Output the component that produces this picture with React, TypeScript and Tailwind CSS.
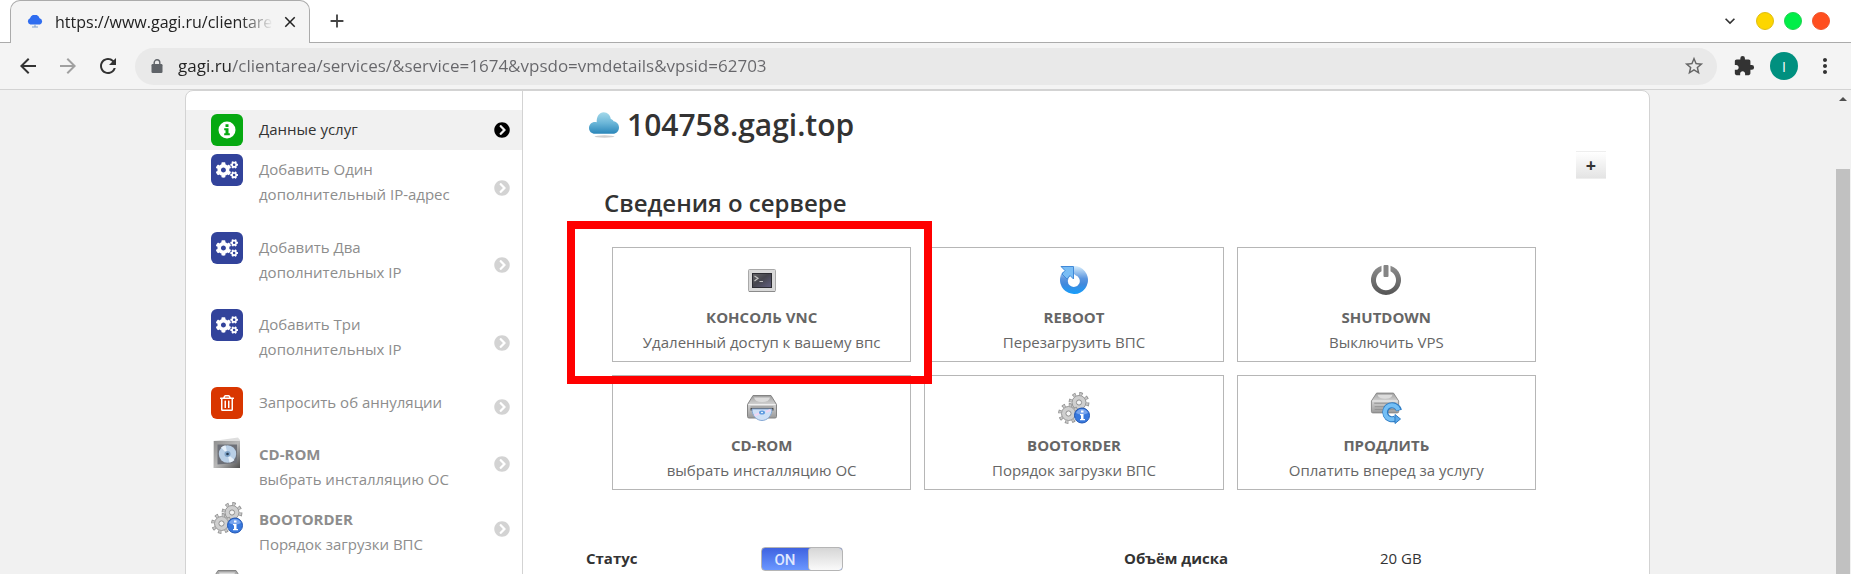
import type { ReactNode } from 'react'
import { FaChevronCircleRight, FaCogs, FaRegTrashAlt } from 'react-icons/fa'
import {
  MdAdd,
  MdArrowBack,
  MdArrowForward,
  MdClose,
  MdExtension,
  MdKeyboardArrowDown,
  MdMoreVert,
  MdRefresh,
  MdStarBorder,
} from 'react-icons/md'

/* ---------- Icons ---------- */

function FaviconCloud() {
  return (
    <svg viewBox="0 0 16 14" className="h-[14px] w-4 shrink-0" aria-hidden="true">
      <path
        d="M3.4 9.600A3.300 3.300 0 0 1 3 3.300 5 5 0 0 1 12.600 3.300 3.300 3.300 0 0 1 13 9.600Z"
        fill="#2f6df0"
      />
      <path d="M7.500 9.600h1v2h-1zM5 11.400h6v1H5z" fill="#7f9fce" />
    </svg>
  )
}

function LockIcon() {
  return (
    <svg viewBox="0 0 12 14" className="h-[14px] w-3 shrink-0" aria-hidden="true">
      <path d="M3.200 6V3.600a2.800 2.800 0 0 1 5.600 0V6" fill="none" stroke="#5f6368" strokeWidth="1.400" />
      <rect x="0.500" y="5" width="11" height="9" rx="1.200" fill="#5f6368" />
    </svg>
  )
}

function InfoIcon() {
  return (
    <svg viewBox="0 0 18 18" className="size-[18px]" aria-hidden="true">
      <circle cx="9" cy="9" r="8.500" fill="#fff" />
      <path d="M7.500 3.300h3v2.600h-3zM6.200 7.200h4.300v5h1.300v2H6.200v-2h1.300v-3H6.200z" fill="#06a911" />
    </svg>
  )
}

function CloudIcon() {
  return (
    <svg viewBox="0 0 30 26" className="h-[26px] w-[30px] shrink-0" aria-hidden="true">
      <defs>
        <linearGradient id="cloud" x1="0" y1="0" x2="0" y2="1">
          <stop offset="0" stopColor="#a4d9ea" />
          <stop offset="0.5" stopColor="#6bb6d8" />
          <stop offset="1" stopColor="#2a86b9" />
        </linearGradient>
      </defs>
      <ellipse cx="15.500" cy="24.500" rx="10" ry="1.200" fill="#cfcfcf" />
      <path
        d="M6 21.800C2.500 21.800 0 19.400 0 16c0-3.300 2.400-6 6-6 .6 0 1.200 0 1.700.2C7.400 4.500 10.400.2 14.600.2c4 0 6.800 3 7.200 6.800 1 .2 2.100.9 2.700 2.200C28 9.600 30 12.500 30 15.500c0 3.600-2.600 6.300-6 6.300Z"
        fill="url(#cloud)"
      />
    </svg>
  )
}

function ConsoleIcon() {
  return (
    <svg viewBox="0 0 32 32" className="size-8" aria-hidden="true">
      <defs>
        <linearGradient id="screen" x1="0" y1="0" x2="1" y2="1">
          <stop offset="0" stopColor="#666668" />
          <stop offset="0.45" stopColor="#45454d" />
          <stop offset="1" stopColor="#625f80" />
        </linearGradient>
      </defs>
      <rect x="2.500" y="5.500" width="27" height="22" rx="1" fill="#d9d9d9" stroke="#a9a9a9" />
      <path d="M3 27.500h26" stroke="#8b8b8b" />
      <rect x="6.500" y="9.500" width="19" height="14" fill="url(#screen)" stroke="#2c2c32" />
      <path d="m8.500 12 3.500 2.300-3.500 2.700M13.500 17.500h3.500" fill="none" stroke="#c4c4c4" strokeWidth="1.200" />
    </svg>
  )
}

function RebootIcon() {
  return (
    <svg viewBox="0 0 32 32" className="size-8" aria-hidden="true">
      <defs>
        <linearGradient id="reboot" x1="0" y1="0" x2="0" y2="1">
          <stop offset="0" stopColor="#d9effd" />
          <stop offset="0.45" stopColor="#5b95de" />
          <stop offset="0.65" stopColor="#4289dc" />
          <stop offset="1" stopColor="#169efb" />
        </linearGradient>
      </defs>
      <path
        d="M16 2A14 14 0 1 1 4.500 8H12V12.300A6 6 0 1 0 17.500 11.200L16 10Z"
        fill="url(#reboot)"
      />
      <path d="M3 2.500H15.500V15L12 11.500 9 15 4 10 7 6.500Z" fill="#79bdf5" stroke="#4189d8" />
    </svg>
  )
}

function PowerIcon() {
  return (
    <svg viewBox="0 0 32 32" className="size-8" aria-hidden="true">
      <defs>
        <linearGradient id="power" x1="0" y1="0" x2="0" y2="1">
          <stop offset="0" stopColor="#8d8d8d" />
          <stop offset="1" stopColor="#555" />
        </linearGradient>
      </defs>
      <path
        d="M11.500 1.700A15 15 0 1 0 20.500 1.700V7.200A10 10 0 1 1 11.500 7.200Z"
        fill="url(#power)"
      />
      <rect x="13.500" y="1" width="5" height="12" rx="1" fill="#858585" />
    </svg>
  )
}

function DriveBody() {
  return (
    <>
      <defs>
        <linearGradient id="drive" x1="0" y1="0" x2="0" y2="1">
          <stop offset="0" stopColor="#9f9f9f" />
          <stop offset="0.4" stopColor="#d2d2d2" />
          <stop offset="1" stopColor="#9a9a9a" />
        </linearGradient>
      </defs>
      <path
        d="M7 3.500H25L30.500 12.500V24.500Q30.500 26 29 26H3Q1.500 26 1.500 24.500V12.500Z"
        fill="url(#drive)"
        stroke="#848484"
      />
      <path d="M2.500 12.500H29.500" stroke="#f0f0f0" />
      <path d="M8 5.500H24Q23 10 16 10T8 5.500Z" fill="#dcdcdc" />
      <path d="M4.500 15H27.500" stroke="#888" />
    </>
  )
}

function CdDriveIcon() {
  return (
    <svg viewBox="0 0 32 32" className="size-8" aria-hidden="true">
      <DriveBody />
      <rect x="4.500" y="16" width="23" height="2.500" fill="#4a4a4a" />
      <path d="M6 17H26C26 24 21 28.500 16 28.500S6 24 6 17Z" fill="#cfe0f6" stroke="#86a8d4" />
      <path d="M8.500 23.500 14 21M20 20l4.500-2" stroke="#eed6f2" strokeWidth="2" />
      <ellipse cx="16" cy="20.500" rx="3" ry="2" fill="#5f9be0" />
      <ellipse cx="16" cy="20.500" rx="1" ry="0.800" fill="#fff" />
    </svg>
  )
}

function RenewIcon() {
  return (
    <svg viewBox="0 0 32 32" className="size-8" aria-hidden="true">
      <g transform="translate(0 -2) scale(0.940 0.880)">
        <DriveBody />
        <path d="M5 19H27M5 22H27" stroke="#8e8e8e" />
      </g>
      <path d="M29 18.500A7 7 0 1 0 25.500 26.500" fill="none" stroke="#2e7cc4" strokeWidth="6" />
      <path d="M28.500 18A7 7 0 1 0 25 26.500" fill="none" stroke="#74bff5" strokeWidth="4" />
      <path d="M25 22.500 30.500 27 25 31.500Z" fill="#5aa9ea" stroke="#2e7cc4" />
    </svg>
  )
}

function Gear({ cx, cy }: { cx: number; cy: number }) {
  return (
    <>
      <circle cx={cx} cy={cy} r="8.400" fill="none" stroke="#8f8f8f" strokeWidth="4" strokeDasharray="3.200 3.400" />
      <circle cx={cx} cy={cy} r="7" fill="#cfcfcf" stroke="#979797" />
      <circle cx={cx} cy={cy} r="8.400" fill="none" stroke="#c6c6c6" strokeWidth="2.400" strokeDasharray="2 4.600" strokeDashoffset="-0.600" />
      <circle cx={cx} cy={cy} r="2.600" fill="#f5f5f5" stroke="#909090" />
    </>
  )
}

function BootOrderIcon() {
  return (
    <svg viewBox="0 0 32 32" className="size-8" aria-hidden="true">
      <Gear cx={21} cy={10.500} />
      <Gear cx={10.500} cy={21.500} />
      <circle cx="24" cy="23.500" r="7.500" fill="#3878dd" stroke="#2257b5" />
      <path d="M18 21A6.500 6.500 0 0 1 30 21Q24 24 18 21Z" fill="#78a5ee" />
      <path d="M23 18.500h2.500v2H23zM22 22h3.500v5H27v1.300h-5V27h1v-3.700h-1z" fill="#fff" />
    </svg>
  )
}

function CdCaseIcon() {
  return (
    <svg viewBox="0 0 32 32" className="size-8" aria-hidden="true">
      <defs>
        <linearGradient id="cdcase" x1="0" y1="0" x2="1" y2="1">
          <stop offset="0" stopColor="#909090" />
          <stop offset="0.500" stopColor="#b9b9b9" />
          <stop offset="1" stopColor="#4f4f4f" />
        </linearGradient>
      </defs>
      <path d="M2 4 27 .500 29 3V31H2Z" fill="#dedede" />
      <path d="M3 4H29V31H3Z" fill="url(#cdcase)" />
      <path d="M6.500 7.500H26V26L6.500 27.500Z" fill="#6d7078" />
      <circle cx="16.500" cy="17" r="8.700" fill="#b9cfe6" />
      <path d="M16.500 17 10 10.500A9 9 0 0 1 14.500 8.300ZM16.500 17l7 6a9 9 0 0 1-5 2.500Z" fill="#e6f0fa" />
      <circle cx="16.500" cy="17" r="3" fill="#7fa3c8" />
      <circle cx="16.500" cy="17" r="1.300" fill="#263b52" />
    </svg>
  )
}

function Tile({ className, children }: { className: string; children: ReactNode }) {
  return (
    <span className={`flex size-8 items-center justify-center rounded-md text-white ${className}`}>
      {children}
    </span>
  )
}

/* ---------- Browser chrome ---------- */

function TabStrip() {
  return (
    <div className="flex h-[43px] shrink-0 border-b border-[#ababab] bg-white pl-[10px]">
      <div className="-mb-px flex h-[43px] w-[300px] items-center rounded-t-[10px] border border-b-0 border-[#ababab] bg-[#f4f4f4] pl-4 pr-[10px]">
        <FaviconCloud />
        <span className="ml-3 flex-1 overflow-hidden whitespace-nowrap text-[16px] text-[#222] [mask-image:linear-gradient(to_right,#000_85%,transparent)]">
          https://www.gagi.ru/clientare
        </span>
        <button aria-label="Закрыть вкладку" className="ml-2 text-[#222]">
          <MdClose className="size-[18px]" />
        </button>
      </div>
      <button aria-label="Новая вкладка" className="ml-4 text-[#444]">
        <MdAdd className="size-[22px]" />
      </button>
      <div className="ml-auto flex items-center pr-[21px]">
        <button aria-label="Поиск вкладок" className="mr-4 text-[#333]">
          <MdKeyboardArrowDown className="size-5" />
        </button>
        <div className="flex gap-[10px]">
          <button aria-label="Свернуть" className="size-[18px] rounded-full border border-[#e0be10] bg-[#fdd600]" />
          <button aria-label="Развернуть" className="size-[18px] rounded-full border border-[#1ed450] bg-[#00ee48]" />
          <button aria-label="Закрыть" className="size-[18px] rounded-full border border-[#f0552c] bg-[#ff4f1f]" />
        </div>
      </div>
    </div>
  )
}

function Toolbar() {
  return (
    <div className="flex h-[47px] shrink-0 items-center border-b border-[#d3d3d3] bg-[#f4f4f4] pl-4 pr-[14px]">
      <div className="flex w-[119px] shrink-0 gap-4 text-[#333]">
        <button aria-label="Назад">
          <MdArrowBack className="size-6" />
        </button>
        <button aria-label="Вперёд" className="text-[#a0a0a0]">
          <MdArrowForward className="size-6" />
        </button>
        <button aria-label="Обновить">
          <MdRefresh className="size-6" />
        </button>
      </div>
      <div className="flex h-[37px] flex-1 items-center rounded-full bg-[#e9e9e9] pl-4 pr-3">
        <LockIcon />
        <input
          type="text"
          aria-label="Адресная строка"
          defaultValue="gagi.ru/clientarea/services/&service=1674&vpsdo=vmdetails&vpsid=62703"
          className="ml-[15px] flex-1 bg-[linear-gradient(to_right,#222_54px,#66666a_54px)] bg-clip-text text-[17px] text-transparent outline-none"
        />
        <button aria-label="Добавить в закладки" className="text-[#666]">
          <MdStarBorder className="size-[22px]" />
        </button>
      </div>
      <div className="ml-4 flex items-center gap-[15px] text-[#333]">
        <button aria-label="Расширения">
          <MdExtension className="size-[22px]" />
        </button>
        <button className="size-7 rounded-full bg-[#00907f] text-[14px] text-white">I</button>
        <button aria-label="Меню">
          <MdMoreVert className="size-6" />
        </button>
      </div>
    </div>
  )
}

function Scrollbar() {
  return (
    <div className="flex w-4 shrink-0 flex-col items-end bg-[#f1f1f1]" aria-hidden="true">
      <div className="my-[7px] mr-1 border-x-4 border-b-4 border-x-transparent border-b-[#505050]" />
      <div className="mr-px mt-[61px] w-[14px] flex-1 bg-[#c1c1c1]" />
    </div>
  )
}

/* ---------- Sidebar ---------- */

interface MenuItem {
  icon: ReactNode
  title?: string
  lines: string[]
  row: string
  active?: boolean
}

const cogs = (
  <Tile className="bg-[#32439b]">
    <FaCogs className="size-[22px]" />
  </Tile>
)

const menu: MenuItem[] = [
  {
    icon: (
      <Tile className="bg-[#06a911]">
        <InfoIcon />
      </Tile>
    ),
    lines: ['Данные услуг'],
    row: 'h-10',
    active: true,
  },
  { icon: cogs, lines: ['Добавить Один', 'дополнительный IP-адрес'], row: 'h-[78px]' },
  { icon: cogs, lines: ['Добавить Два', 'дополнительных IP'], row: 'h-[77px]' },
  { icon: cogs, lines: ['Добавить Три', 'дополнительных IP'], row: 'h-[78px]' },
  {
    icon: (
      <Tile className="bg-[#d93600]">
        <FaRegTrashAlt className="size-4" />
      </Tile>
    ),
    lines: ['Запросить об аннуляции'],
    row: 'h-[50px]',
  },
  { icon: <CdCaseIcon />, title: 'CD-ROM', lines: ['выбрать инсталляцию ОС'], row: 'h-[65px]' },
  { icon: <BootOrderIcon />, title: 'BOOTORDER', lines: ['Порядок загрузки ВПС'], row: 'h-[65px]' },
  { icon: <CdDriveIcon />, lines: [], row: 'h-[65px]' },
]

function Sidebar() {
  return (
    <nav className="w-[337px] shrink-0 border-r border-[#d3d3d3] pt-[19px]">
      {menu.map((item, i) => (
        <a
          key={i}
          href="#"
          className={`flex pl-[25px] pr-3 ${item.row} ${item.active ? 'bg-[#f1f1f1] text-[#333]' : 'text-[#8d8d8d]'}`}
        >
          <span className="mt-1 shrink-0">{item.icon}</span>
          <span className={`ml-4 flex-1 leading-[25px] ${item.title ? 'pt-[9px]' : 'pt-[7px]'}`}>
            {item.title && <strong className="block font-bold">{item.title}</strong>}
            {item.lines.map((line) => (
              <span key={line} className="block whitespace-nowrap">
                {line}
              </span>
            ))}
          </span>
          <FaChevronCircleRight
            className={`size-4 self-center ${item.active ? 'text-black' : 'mb-[3px] text-[#d3d3d3]'}`}
          />
        </a>
      ))}
    </nav>
  )
}

/* ---------- Server details ---------- */

const actions = [
  { icon: <ConsoleIcon />, title: 'КОНСОЛЬ VNC', text: 'Удаленный доступ к вашему впс', marked: true },
  { icon: <RebootIcon />, title: 'REBOOT', text: 'Перезагрузить ВПС' },
  { icon: <PowerIcon />, title: 'SHUTDOWN', text: 'Выключить VPS' },
  { icon: <CdDriveIcon />, title: 'CD-ROM', text: 'выбрать инсталляцию ОС' },
  { icon: <BootOrderIcon />, title: 'BOOTORDER', text: 'Порядок загрузки ВПС' },
  { icon: <RenewIcon />, title: 'ПРОДЛИТЬ', text: 'Оплатить вперед за услугу' },
]

function ServerDetails() {
  return (
    <section className="min-w-0 flex-1 pl-[63px] pr-[43px] pt-3 text-[#333]">
      <h1 className="ml-[3px] flex items-center gap-2 text-[30px] font-semibold leading-[44px]">
        <CloudIcon />
        104758.gagi.top
      </h1>

      <div className="mt-1 flex justify-end">
        <button
          aria-label="Добавить"
          className="flex h-7 w-[30px] items-center justify-center border-y border-[#eee] bg-linear-to-b from-white to-[#e4e4e4] text-[18px] font-bold leading-none"
        >
          +
        </button>
      </div>

      <h2 className="ml-[18px] mt-2 text-[24px] font-semibold leading-8">Сведения о сервере</h2>

      <ul className="ml-[26px] mr-[70px] mt-7 grid grid-cols-3 gap-[13px]">
        {actions.map((action) => (
          <li key={action.title} className="relative">
            <a
              href="#"
              className="flex flex-col items-center border border-[#b6b6b6] pb-[6px] pt-4 leading-[25px] text-[#666]"
            >
              {action.icon}
              <strong className="mt-[9px] font-bold">{action.title}</strong>
              <span>{action.text}</span>
            </a>
            {action.marked && (
              <span className="pointer-events-none absolute -bottom-[22px] -left-[45px] -right-[21px] -top-[26px] z-10 border-8 border-[#f00]" />
            )}
          </li>
        ))}
      </ul>

      <dl className="mt-14 grid grid-cols-[175px_363px_256px_1fr] items-center leading-[25px]">
        <dt id="status" className="font-bold">
          Статус
        </dt>
        <dd>
          <label className="flex h-6 w-[82px] overflow-hidden rounded border border-[#b5b5b5] bg-linear-to-b from-[#3f62e0] to-[#6b97ff]">
            <input type="checkbox" defaultChecked aria-labelledby="status" className="sr-only" />
            <span className="flex-1 text-center font-[Roboto] text-[15px] font-medium leading-6 text-[#dfe7ff]">
              ON
            </span>
            <span className="w-[34px] rounded-[3px] border-l border-[#b5b5b5] bg-linear-to-b from-[#d6d6d6] to-[#fafafa]" />
          </label>
        </dd>
        <dt className="font-bold">Объём диска</dt>
        <dd>20 GB</dd>
      </dl>
    </section>
  )
}

export default function App() {
  return (
    <div className="flex h-screen flex-col overflow-hidden bg-[#f1f1f1] font-['Open_Sans',sans-serif] text-[15px]">
      <TabStrip />
      <Toolbar />
      <div className="flex min-h-0 flex-1">
        <main className="min-w-0 flex-1 overflow-hidden">
          <div className="mx-auto flex w-full max-w-[1465px] rounded-lg border border-[#d3d3d3] bg-white">
            <Sidebar />
            <ServerDetails />
          </div>
        </main>
        <Scrollbar />
      </div>
    </div>
  )
}
